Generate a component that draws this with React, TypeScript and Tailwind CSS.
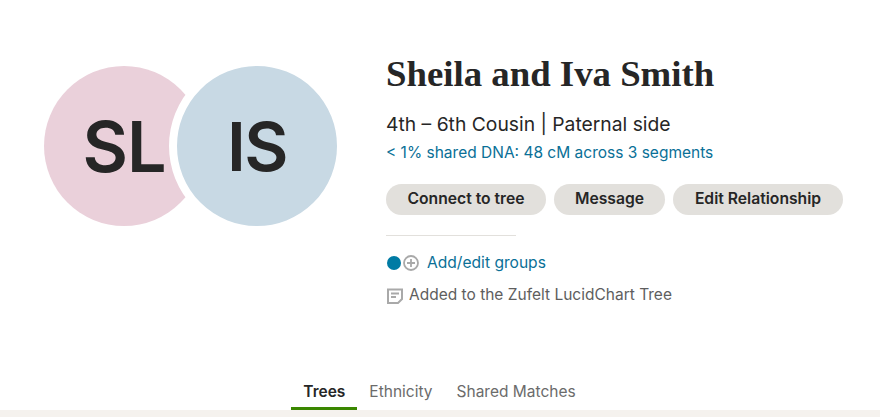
export default function App() {
  return (
    <div className="w-[880px] h-[417px] overflow-hidden bg-white flex flex-col font-['Inter',sans-serif] text-[#262626]">
      <div className="h-[375px] flex pl-[44px]">
        <div className="flex pt-[66px] h-fit">
          <div className="w-[160px] h-[160px] rounded-full bg-[#ead0da] flex items-center justify-center text-[70px] font-semibold tracking-[-1px]">SL</div>
          <div className="w-[176px] h-[176px] -mt-[8px] -ml-[35px] rounded-full bg-[#c8d9e4] border-[8px] border-white flex items-center justify-center text-[68px] font-semibold tracking-[-1.5px] relative">IS</div>
        </div>
        <div className="ml-[41px] pt-[52px] flex flex-col items-start">
          <h1 className="font-['Liberation_Serif',serif] font-bold text-[36.8px] leading-[44px] text-[#262626]">Sheila and Iva Smith</h1>
          <p className="mt-[16px] text-[19.3px] leading-[24px]">4th – 6th Cousin | Paternal side</p>
          <p className="mt-[7px] text-[15.5px] leading-[20px] text-[#0a7097]">&lt; 1% shared DNA: 48 cM across 3 segments</p>
          <div className="mt-[21px] flex gap-[8px]">
            <button className="h-[31px] w-[160px] pb-[2px] rounded-full bg-[#e2e0dc] text-[15.7px] font-semibold">Connect to tree</button>
            <button className="h-[31px] w-[111px] pb-[2px] rounded-full bg-[#e2e0dc] text-[15.7px] font-semibold">Message</button>
            <button className="h-[31px] w-[170px] pb-[2px] rounded-full bg-[#e2e0dc] text-[15.7px] font-semibold">Edit Relationship</button>
          </div>
          <div className="mt-[20px] w-[130px] h-px bg-[#e2e0dc]" />
          <div className="mt-[17px] flex items-center h-[20px]">
            <span className="ml-[1px] w-[14px] h-[14px] rounded-full bg-[#007ba4]" />
            <svg className="ml-[2px]" width="16" height="16" viewBox="0 0 16 16" fill="none" stroke="#a9a9a9" strokeWidth="1.8">
              <circle cx="8" cy="8" r="7" />
              <path d="M8 4v8M4 8h8" />
            </svg>
            <span className="ml-[8px] text-[15.6px] text-[#0a7097]">Add/edit groups</span>
          </div>
          <div className="mt-[12px] flex items-center h-[20px] text-[#5e5e5e]">
            <svg width="18" height="18" viewBox="0 0 18 18" fill="none" stroke="#a9a9a9" strokeWidth="2" className="mt-[1px]">
              <path d="M2 2.5h14v9.5l-4 4H2z" />
              <path d="M5 6.5h8M5 10h5" />
            </svg>
            <span className="ml-[5px] text-[15.5px]">Added to the Zufelt LucidChart Tree</span>
          </div>
        </div>
      </div>
      <div className="h-[35px] flex justify-center text-[15.5px] text-[#6b6b6b]">
        <div className="flex mr-[1px]">
          <div className="px-[12px] pt-[5px] border-b-[3px] border-[#3a8700] font-semibold text-[#262626]">Trees</div>
          <div className="px-[12px] pt-[5px]">Ethnicity</div>
          <div className="px-[12px] pt-[5px]">Shared Matches</div>
        </div>
      </div>
      <div className="flex-1 bg-[#f5f2ee]" />
    </div>
  );
}
